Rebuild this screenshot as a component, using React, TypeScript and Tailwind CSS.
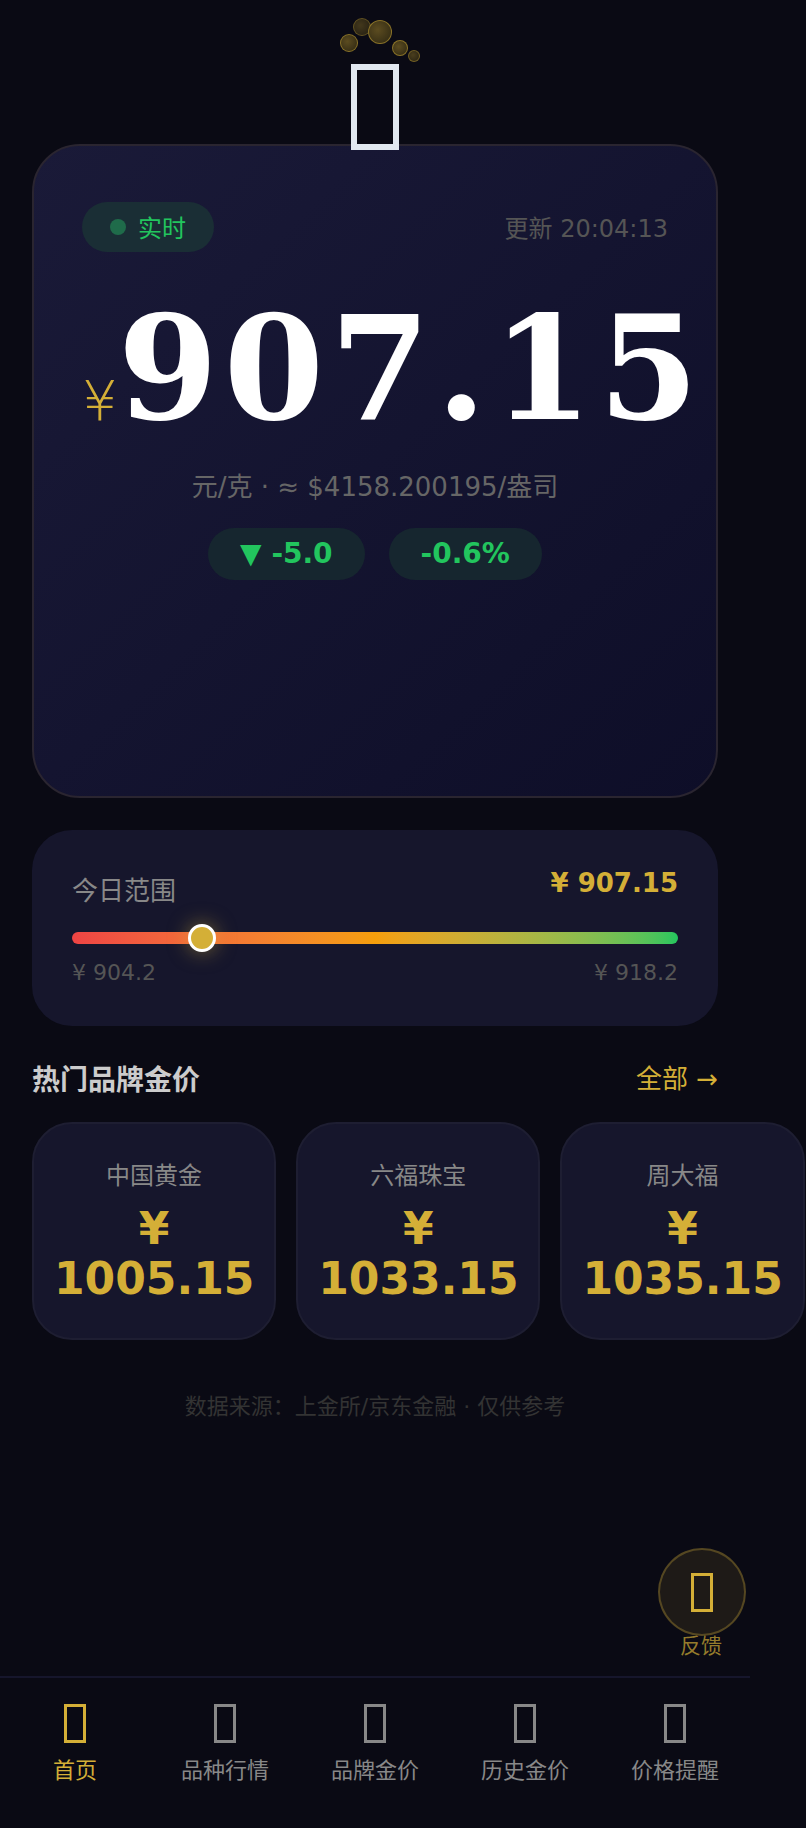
const brands = [
  { name: '中国黄金', price: '¥ 1005.15' },
  { name: '六福珠宝', price: '¥ 1033.15' },
  { name: '周大福', price: '¥ 1035.15' },
];

const navItems = [
  { label: '首页', active: true },
  { label: '品种行情', active: false },
  { label: '品牌金价', active: false },
  { label: '历史金价', active: false },
  { label: '价格提醒', active: false },
];

function Coin({ className }: { className: string }) {
  return (
    <div
      className={`absolute rounded-full border border-[#d4af37]/50 bg-[radial-gradient(circle_at_40%_40%,#5c4c20,#2c2612)] ${className}`}
    />
  );
}

// the reference shows its emoji icons as empty "missing glyph" boxes
function GlyphBox({ className }: { className: string }) {
  return <div className={`h-[39px] w-[22px] border-[3px] ${className}`} />;
}

function Logo() {
  return (
    <div className="relative z-10 h-[144px] w-full">
      <Coin className="left-[353px] top-[18px] h-[18px] w-[18px] opacity-70" />
      <Coin className="left-[368px] top-[20px] h-[24px] w-[24px]" />
      <Coin className="left-[340px] top-[34px] h-[18px] w-[18px]" />
      <Coin className="left-[392px] top-[40px] h-[16px] w-[16px]" />
      <Coin className="left-[408px] top-[50px] h-[12px] w-[12px] opacity-80" />
      <div className="absolute left-[351px] top-[64px] h-[86px] w-[48px] border-[6px] border-[#e2e8f0]" />
    </div>
  );
}

function HeroCard() {
  return (
    <div className="mx-8 h-[654px] rounded-[48px] border-2 border-[#2a2530] bg-gradient-to-br from-[#1a1a38] to-[#0e0e28] px-12 pt-[56px]">
      <div className="flex items-center justify-between">
        <div className="flex h-[50px] items-center gap-3 rounded-full bg-[#1a2e35] px-7 text-[24px] text-[#22c55e]">
          <span className="h-4 w-4 rounded-full bg-[#1f6b4a]" />
          <span className="mt-[3px]">实时</span>
        </div>
        <span className="mt-[3px] text-[24px] text-[#555555]">更新 20:04:13</span>
      </div>
      <div className="mt-[29px] flex items-end whitespace-nowrap">
        <span className="mb-[28px] text-[56px] font-extralight leading-none text-[#d4af37]">¥</span>
        <span className="font-['DejaVu_Serif',serif] text-[144px] font-bold leading-[176px] tracking-[6px] text-white">907.15</span>
      </div>
      <p className="mt-[11px] text-center text-[26px] text-[#666666]">元/克 · ≈ $4158.200195/盎司</p>
      <div className="mt-[21px] flex justify-center gap-6">
        <span className="flex h-[52px] items-center rounded-full bg-[#16262f] px-8 text-[28px] font-bold text-[#22c55e]">▼ -5.0</span>
        <span className="flex h-[52px] items-center rounded-full bg-[#16262f] px-8 text-[28px] font-bold text-[#22c55e]">-0.6%</span>
      </div>
    </div>
  );
}

function RangeCard() {
  return (
    <div className="mx-8 mt-8 h-[196px] rounded-[40px] bg-[#16162c] px-10 pt-[34px]">
      <div className="flex justify-between">
        <span className="mt-[8px] text-[26px] text-[#888888]">今日范围</span>
        <span className="text-[26px] font-bold text-[#d4af37]">¥ 907.15</span>
      </div>
      <div className="relative mt-[21px] h-3 rounded-full bg-gradient-to-r from-[#ef4444] via-[#f59e0b] to-[#22c55e]">
        <div className="absolute left-[116px] top-[-8px] h-7 w-7 rounded-full border-[3px] border-white bg-[#d4af37] shadow-[0_0_20px_rgba(212,175,55,0.5)]" />
      </div>
      <div className="mt-[12px] flex justify-between text-[22px] text-[#555555]">
        <span>¥ 904.2</span>
        <span>¥ 918.2</span>
      </div>
    </div>
  );
}

function BrandCard({ name, price }: { name: string; price: string }) {
  return (
    <div className="h-[218px] w-[244.2px] shrink-0 rounded-[40px] border-2 border-[#1e1e32] bg-[#16162c] px-5 pt-[34px] text-center">
      <p className="text-[24px] text-[#888888]">{name}</p>
      <p className="mt-[10px] text-[44px] font-bold leading-[50px] text-[#d4af37]">{price}</p>
    </div>
  );
}

export default function App() {
  return (
    <div className="relative h-[1828px] w-[806px] overflow-hidden bg-[#0a0a14] font-['DejaVu_Sans','Noto_Sans_CJK_SC',sans-serif]">
      <div className="flex h-full w-[750px] flex-col">
        <Logo />
        <HeroCard />
        <RangeCard />
        <div className="mx-8 mt-[31px] flex items-center justify-between">
          <h2 className="pt-[3px] text-[28px] font-bold text-[#cccccc]">热门品牌金价</h2>
          <span className="text-[26px] text-[#d4af37]">全部 →</span>
        </div>
        <div className="ml-8 mt-[20px] flex w-max gap-5">
          {brands.map((b) => (
            <BrandCard key={b.name} name={b.name} price={b.price} />
          ))}
        </div>
        <p className="mt-[50px] text-center text-[22px] text-[#333333]">数据来源：上金所/京东金融 · 仅供参考</p>
        <nav className="mt-auto flex h-[152px] border-t-2 border-[#16162c] pt-[26px]">
          {navItems.map((item) => (
            <div key={item.label} className={`flex flex-1 flex-col items-center ${item.active ? 'text-[#d4af37]' : 'text-[#888888]'}`}>
              <GlyphBox className={item.active ? 'border-[#d4af37]' : 'border-[#888888]'} />
              <span className="mt-[11px] text-[22px]">{item.label}</span>
            </div>
          ))}
        </nav>
      </div>
      <div className="absolute left-[657px] top-[1548px] flex w-[88px] flex-col items-center">
        <div className="flex h-[88px] w-[88px] translate-x-px items-center justify-center rounded-full border-2 border-[#d4af37]/30 bg-[#d4af37]/10">
          <GlyphBox className="border-[#d4af37]" />
        </div>
        <span className="text-[21px] leading-[20px] text-[#d4af37]/70">反馈</span>
      </div>
    </div>
  );
}
